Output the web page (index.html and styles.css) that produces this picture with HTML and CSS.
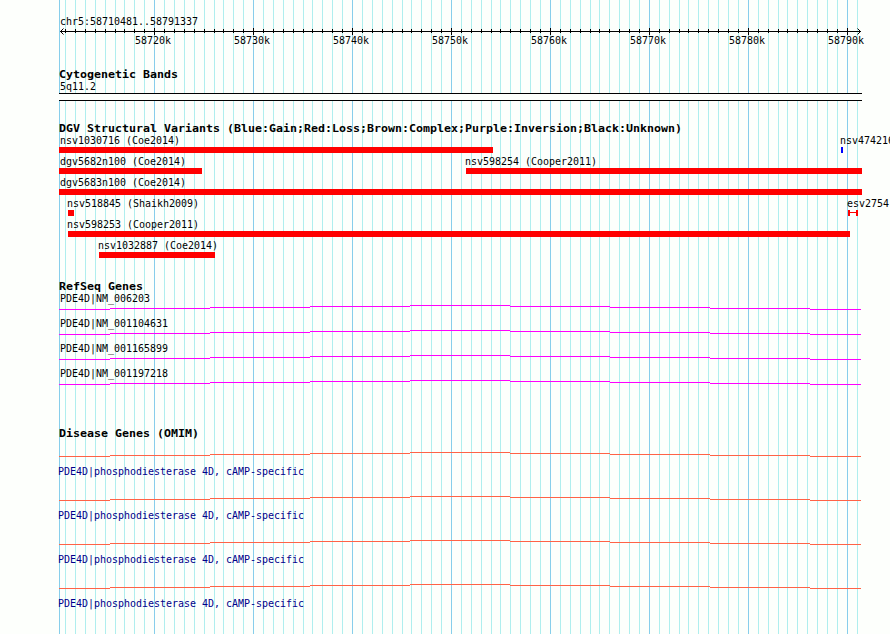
FILE: index.html
```
<!DOCTYPE html>
<html lang="en">
<head>
<meta charset="utf-8">
<title>chr5:58710481..58791337</title>
<link rel="stylesheet" href="styles.css">
</head>
<body>
<main class="browser">
  <svg class="grid" id="grid" width="890" height="634" aria-hidden="true"></svg>
  <section class="track ruler"><svg id="ruler" width="890" height="66"></svg></section>
  <section class="track cytobands"><svg id="cytobands" width="890" height="54"></svg></section>
  <section class="track variants"><svg id="variants" width="890" height="158"></svg></section>
  <section class="track refseq"><svg id="refseq" width="890" height="147"></svg></section>
  <section class="track omim"><svg id="omim" width="890" height="209"></svg></section>
</main>
<script src="tracks.js"></script>
</body>
</html>
```
FILE: styles.css
```
body {
  margin: 0;
  background: #fdfffc;
}

.browser {
  position: relative;
  display: flex;
  flex-direction: column;
  width: 890px;
  height: 634px;
  overflow: hidden;
}

.grid {
  position: absolute;
  inset: 0;
}

.track {
  position: relative;
  flex: none;
}

svg {
  display: block;
  overflow: hidden;
}

rect {
  shape-rendering: crispEdges;
}

text {
  font: 11px "DejaVu Sans Mono", monospace;
  fill: #000;
  white-space: pre;
}

.title {
  font-weight: bold;
}

.minor { fill: #afeeee; }
.major { fill: #87ceeb; }
.ink { fill: #000; }
.band { fill: #fdfffc; }
.loss { fill: #f00; }
.gain { fill: #00f; }
.gene { fill: #f0f; }
.disease { fill: #ff6347; }
.note { fill: #00008b; }

.arrow {
  fill: none;
  stroke: #000;
  stroke-width: 1;
}
```
FILE: tracks.js
```
const NS = 'http://www.w3.org/2000/svg';

function add(parent, tag, attrs, content) {
  const el = document.createElementNS(NS, tag);
  for (const key in attrs) el.setAttribute(key, attrs[key]);
  if (content) el.textContent = content;
  parent.appendChild(el);
}

const get = id => document.getElementById(id);
const box = (p, x, y, width, height, cls) => add(p, 'rect', { x, y, width, height, class: cls });

// Every character takes a fixed cell: 6px for labels, 7px for titles.
const label = (p, x, y, s, cls = 'label') =>
  add(p, 'text', { x, y, class: cls, textLength: s.length * 6, lengthAdjust: 'spacingAndGlyphs' }, s);
const title = (p, y, s) =>
  add(p, 'text', { x: 59, y, class: 'title', textLength: s.length * 7, lengthAdjust: 'spacingAndGlyphs' }, s);

const position = kb => Math.round(60 + (kb * 1000 - 58710481) * 800 / 80857);

const grid = get('grid');
const ruler = get('ruler');
box(grid, 59, 0, 1, 634, 'major');
box(ruler, 60, 31, 801, 1, 'ink');
for (let kb = 58711; kb <= 58791; kb++) {
  const x = position(kb);
  const major = kb % 10 === 0;
  box(grid, x, 0, 1, 634, major ? 'major' : 'minor');
  if (major) {
    box(ruler, x, 28, 1, 7, 'ink');
    label(ruler, x - 19, 44, kb + 'k');
  } else if (kb < 58791) {
    box(ruler, x, 29, 1, 4, 'ink');
  }
}
label(ruler, 60, 25, 'chr5:58710481..58791337');
add(ruler, 'path', { d: 'M63.5 28.5l-3 3l3 3M857.5 28.5l3 3l-3 3', class: 'arrow' });

const cyto = get('cytobands');
title(cyto, 12, 'Cytogenetic Bands');
label(cyto, 60, 24, '5q11.2');
box(cyto, 59, 27, 803, 8, 'ink');
box(cyto, 59, 28, 803, 6, 'band');

const variants = get('variants');
title(variants, 12, 'DGV Structural Variants (Blue:Gain;Red:Loss;Brown:Complex;Purple:Inversion;Black:Unknown)');
[
  [0, 59, 493, 'nsv1030716 (Coe2014)', 60, 'loss'],
  [0, 841, 843, 'nsv474216 (Cooper2011)', 840, 'gain'],
  [1, 59, 202, 'dgv5682n100 (Coe2014)', 60, 'loss'],
  [1, 466, 862, 'nsv598254 (Cooper2011)', 465, 'loss'],
  [2, 59, 862, 'dgv5683n100 (Coe2014)', 60, 'loss'],
  [3, 68, 74, 'nsv518845 (Shaikh2009)', 67, 'loss'],
  [4, 68, 850, 'nsv598253 (Cooper2011)', 67, 'loss'],
  [5, 99, 215, 'nsv1032887 (Coe2014)', 98, 'loss']
].forEach(([row, start, end, name, x, type]) => {
  label(variants, x, 24 + row * 21, name);
  box(variants, start, 27 + row * 21, end - start, 6, type);
});
label(variants, 847, 87, 'esv2754');
box(variants, 848, 90, 2, 6, 'loss');
box(variants, 856, 90, 2, 6, 'loss');
box(variants, 850, 92, 6, 1, 'loss');

// Introns are drawn as a shallow arch, one pixel per step.
const edges = [59, 110, 210, 310, 410, 510, 610, 710, 810, 861];
function intron(p, y, cls) {
  for (let i = 0; i < 9; i++) {
    box(p, edges[i], y - Math.min(i, 8 - i), edges[i + 1] - edges[i], 1, cls);
  }
}

const refseq = get('refseq');
title(refseq, 12, 'RefSeq Genes');
['NM_006203', 'NM_001104631', 'NM_001165899', 'NM_001197218'].forEach((id, i) => {
  label(refseq, 60, 24 + i * 25, 'PDE4D|' + id);
  intron(refseq, 31 + i * 25, 'gene');
});

const omim = get('omim');
title(omim, 12, 'Disease Genes (OMIM)');
for (let i = 0; i < 4; i++) {
  intron(omim, 31 + i * 44, 'disease');
  label(omim, 58, 50 + i * 44, 'PDE4D|phosphodiesterase 4D, cAMP-specific', 'note');
}
```
